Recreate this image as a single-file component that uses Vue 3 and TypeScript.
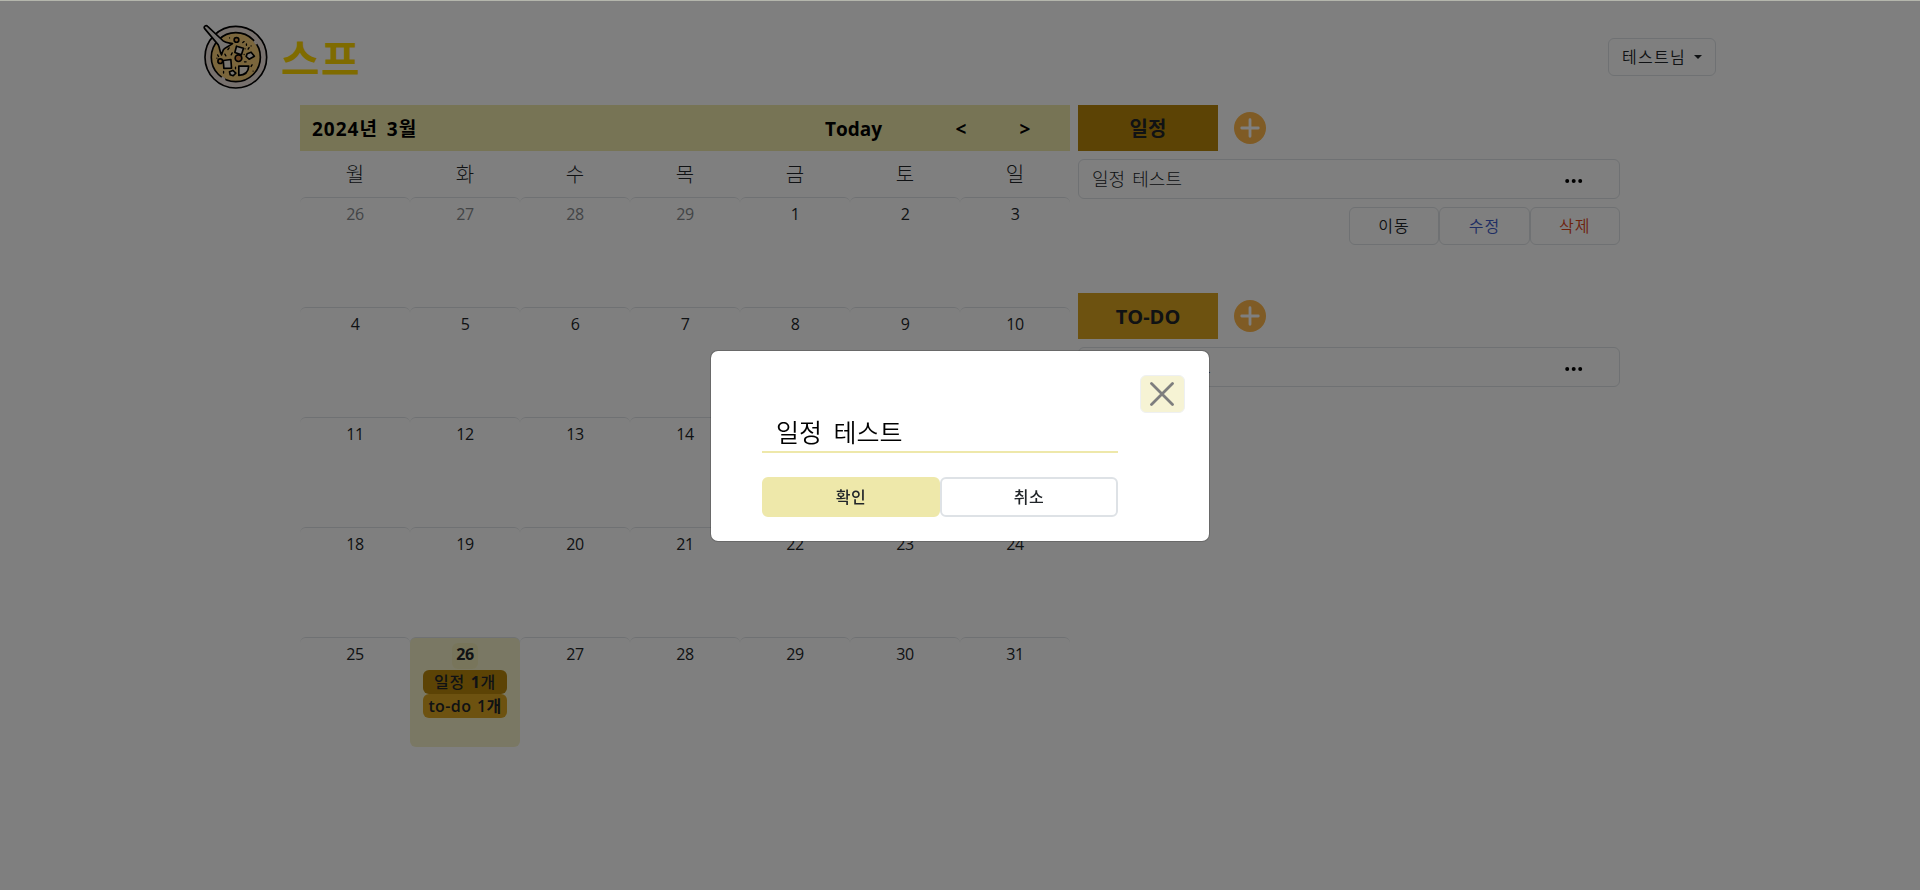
<script setup lang="ts">
import { ref } from 'vue'

interface Day {
  n: number
  muted?: boolean
  today?: boolean
}

interface Section {
  kind: 'schedule' | 'todo'
  title: string
  item: string
  open: boolean
}

const weekdays: string[] = ['월', '화', '수', '목', '금', '토', '일']

const days: Day[] = [
  ...[26, 27, 28, 29].map((n) => ({ n, muted: true })),
  ...Array.from({ length: 31 }, (_, i) => ({ n: i + 1, today: i + 1 === 26 })),
]

const sections: Section[] = [
  { kind: 'schedule', title: '일정', item: '일정 테스트', open: true },
  { kind: 'todo', title: 'TO-DO', item: 'TO-DO 테스트', open: false },
]

const draft = ref('일정 테스트')
</script>

<template>
  <div class="page">
    <header class="top">
      <div class="brand">
        <svg class="logo" viewBox="26 26 194 196" fill="none" stroke="#000" stroke-width="5" stroke-linecap="round" stroke-linejoin="round">
          <circle cx="124" cy="126" r="93" fill="#efe3dc" />
          <circle cx="124" cy="126" r="74" fill="#f6cd78" />
          <path d="M181 79l4 5M84 188l5 4" stroke="#efe3dc" stroke-width="7" />
          <path d="M30 40c-5-6 4-12 9-7l48 45c7 6 15 5 27 7-10 8-21 11-27 18-3 5-4 10-6 16-6-9-5-20-10-30z" fill="#ede9e4" />
          <circle cx="126" cy="74" r="7" fill="#eda24b" />
          <circle cx="132" cy="129" r="10" fill="#d98a45" />
          <circle cx="77" cy="138" r="7" fill="#eda24b" />
          <path d="M126 93l21 6-6 20-20-7z" fill="#f7efe4" />
          <path d="M86 136l23-3 2 26-23 1z" fill="#f7efe4" />
          <path d="M158 116l12-5 10 12-16 9-9-8z" fill="#f7efe4" />
          <path d="M133 153h30c-1 17-9 27-30 28z" fill="#f7efe4" />
          <path d="M105 170l10-4 9 8-8 8-9-3z" fill="#f7efe4" />
          <path d="M105 68h0M145 82l4-3M156 86v4M164 97l-3 5M170 92h0M104 98l-4 5M113 113l-3 6M149 118h0M150 140h5M173 149l-3 5M69 119l3 5M91 117l3 5M67 129h0M87 169v5M123 156v5M176 168h0M152 101h0" stroke-width="4" />
        </svg>
        <span class="name">스프</span>
      </div>
      <button class="user">테스트님<i class="caret"></i></button>
    </header>

    <main class="main">
      <section class="calendar">
        <div class="bar">
          <span class="month">2024년 3월</span>
          <span class="today-link">Today</span>
          <span class="nav">&lt;</span>
          <span class="nav">&gt;</span>
        </div>
        <div class="weekdays">
          <span v-for="w in weekdays" :key="w">{{ w }}</span>
        </div>
        <div class="grid">
          <div v-for="(d, i) in days" :key="i" class="cell" :class="{ muted: d.muted, today: d.today }">
            <span class="num">{{ d.n }}</span>
            <template v-if="d.today">
              <span class="badge schedule">일정 <b>1</b>개</span>
              <span class="badge todo">to-do 1개</span>
            </template>
          </div>
        </div>
      </section>

      <aside class="lists">
        <section v-for="s in sections" :key="s.kind" class="list">
          <div class="head">
            <h2 class="title" :class="s.kind">{{ s.title }}</h2>
            <svg class="add" viewBox="0 0 32 32">
              <circle cx="16" cy="16" r="16" fill="#ffb74b" />
              <path d="M16 7.750v16.500M7.750 16h16.500" stroke="#fff" stroke-width="2.800" stroke-linecap="round" />
            </svg>
          </div>
          <div class="item" :class="s.kind + '-item'">
            <span>{{ s.item }}</span>
            <svg class="dots" viewBox="0 0 18 4"><circle cx="2.200" cy="2" r="2" /><circle cx="8.700" cy="2" r="2" /><circle cx="15.200" cy="2" r="2" /></svg>
          </div>
          <div v-if="s.open" class="actions">
            <button>이동</button>
            <button class="edit">수정</button>
            <button class="remove">삭제</button>
          </div>
        </section>
      </aside>
    </main>

    <div class="overlay">
      <div class="modal">
        <button class="close">
          <svg viewBox="0 0 24 24"><path d="M1.500 1.500l21 21M22.500 1.500l-21 21" stroke="#000" stroke-width="2.800" stroke-linecap="round" /></svg>
        </button>
        <input v-model="draft" class="field" type="text" spellcheck="false" />
        <div class="choices">
          <button class="ok">확인</button>
          <button class="cancel">취소</button>
        </div>
      </div>
    </div>
  </div>
</template>

<style>
html,
body {
  margin: 0;
  background: #fff;
  overflow: hidden;
}
</style>

<style scoped>
.page,
.page * {
  box-sizing: border-box;
}
.page {
  height: 890px;
  font-family: 'Open Sans', 'Noto Sans CJK KR', sans-serif;
  font-size: 16px;
  font-weight: 350;
  line-height: 24px;
  color: #212529;
}
button,
input {
  font: inherit;
  color: inherit;
  padding: 0;
  background: transparent;
}
.top {
  display: flex;
  justify-content: space-between;
  height: 105px;
  padding: 24px 204px 0 203px;
}
.brand {
  display: flex;
  height: 66px;
}
.logo {
  width: 65px;
  height: 65px;
}
.name {
  margin-left: 13px;
  font-size: 42px;
  line-height: 69px;
  font-weight: 700;
  color: #ffd700;
  letter-spacing: 1.400px;
}
.user {
  display: flex;
  align-items: center;
  width: 108px;
  height: 38px;
  margin-top: 14px;
  padding-left: 13px;
  border: 1px solid #dee2e6;
  border-radius: 6px;
  letter-spacing: 1.300px;
}
.caret {
  margin-left: 8px;
  border: 4.500px solid transparent;
  border-top-color: #212529;
  border-bottom: 0;
}
.main {
  display: flex;
  gap: 8px;
  padding-left: 300px;
}
.calendar {
  width: 770px;
}
.bar {
  display: flex;
  align-items: center;
  height: 46px;
  padding: 2px 0 0 12px;
  background: #eee8aa;
  color: #000;
  font-size: 19px;
  font-weight: 700;
}
.month {
  width: 494px;
  letter-spacing: 1px;
  word-spacing: 3px;
}
.today-link {
  width: 95px;
  text-align: center;
  margin-right: 28px;
}
.nav {
  width: 64px;
  text-align: center;
}
.weekdays {
  display: grid;
  grid-template-columns: repeat(7, 110px);
  height: 46px;
  line-height: 48px;
  text-align: center;
  font-size: 20px;
  font-weight: 300;
}
.grid {
  display: grid;
  grid-template-columns: repeat(7, 110px);
  grid-auto-rows: 110px;
}
.cell {
  display: flex;
  flex-direction: column;
  align-items: center;
  padding-top: 3px;
  border-top: 1px solid #dee2e6;
  border-radius: 6px;
}
.muted {
  color: #85898d;
}
.num {
  height: 26px;
  padding: 0 4px;
  line-height: 26px;
  border-radius: 6px;
  font-weight: 400;
  letter-spacing: -0.500px;
}
.today {
  background: #f5f1c8;
}
.today .num {
  margin-top: 2px;
  line-height: 23px;
  font-weight: 700;
  background: #eee8aa99;
}
.badge {
  width: 84px;
  height: 24px;
  line-height: 24px;
  border-radius: 6px;
  text-align: center;
  white-space: nowrap;
  font-weight: 600;
  letter-spacing: 0.400px;
  word-spacing: 1px;
}
.badge.schedule {
  margin-top: 1px;
  font-weight: 500;
  letter-spacing: 0.700px;
}
.schedule {
  background: #b8860b;
}
.todo {
  background: #daa520;
}
.lists {
  width: 542px;
}
.list {
  height: 188px;
}
.head {
  display: flex;
  align-items: center;
  height: 46px;
}
.title {
  width: 140px;
  margin: 0;
  line-height: 46px;
  height: 46px;
  padding-top: 1px;
  text-align: center;
  font-size: 20px;
  font-weight: 700;
}
.add {
  width: 32px;
  height: 32px;
  margin: 0 0 1px 15.500px;
}
.item {
  display: flex;
  align-items: center;
  justify-content: space-between;
  height: 40px;
  margin-top: 8px;
  padding: 0 36px 0 13px;
  border: 1px solid #dee2e6;
  border-radius: 6px;
  font-size: 18px;
  font-weight: 300;
  word-spacing: 2.500px;
}
.todo-item {
  letter-spacing: 0.800px;
}
.dots {
  width: 18px;
  height: 4px;
  margin-top: 4px;
  fill: #000;
}
.actions {
  display: flex;
  justify-content: flex-end;
  margin-top: 8px;
}
.actions button {
  width: 90.400px;
  height: 38px;
  border: 1px solid #dee2e6;
  border-radius: 6px;
  letter-spacing: 1px;
}
.actions .edit {
  color: #3f5cc8;
}
.actions .remove {
  color: #dc4418;
}
.overlay {
  position: fixed;
  inset: 0;
  display: flex;
  justify-content: center;
  align-items: flex-start;
  padding-top: 349px;
  border-top: 1px solid #b4b6ac;
  background: rgba(0, 0, 0, 0.5);
  background-clip: padding-box;
}
.modal {
  display: flex;
  flex-direction: column;
  width: 500px;
  height: 192px;
  padding: 24px 24px 0 51px;
  border: 1px solid rgba(0, 0, 0, 0.175);
  border-radius: 8px;
  background: #fff;
  background-clip: padding-box;
}
.close {
  display: flex;
  align-items: center;
  justify-content: center;
  align-self: flex-end;
  width: 45px;
  height: 38px;
  padding-right: 1px;
  border: 1px solid #dee2e6;
  border-radius: 6px;
  background: #eee8aa;
  opacity: 0.5;
}
.close svg {
  width: 24px;
  height: 24px;
}
.field {
  width: 356px;
  height: 40px;
  padding: 0 14px 3px;
  border: 0;
  border-bottom: 2px solid #eee8aa;
  outline: 0;
  color: #000;
  font-size: 25px;
  word-spacing: 5px;
}
.choices {
  display: flex;
  margin-top: 24px;
}
.choices button {
  width: 178px;
  height: 40px;
  border: 2px solid #dee2e6;
  border-radius: 6px;
  font-weight: 500;
  letter-spacing: 0.500px;
}
.choices .ok {
  border-color: #eee8aa;
  background: #eee8aa;
}
</style>
